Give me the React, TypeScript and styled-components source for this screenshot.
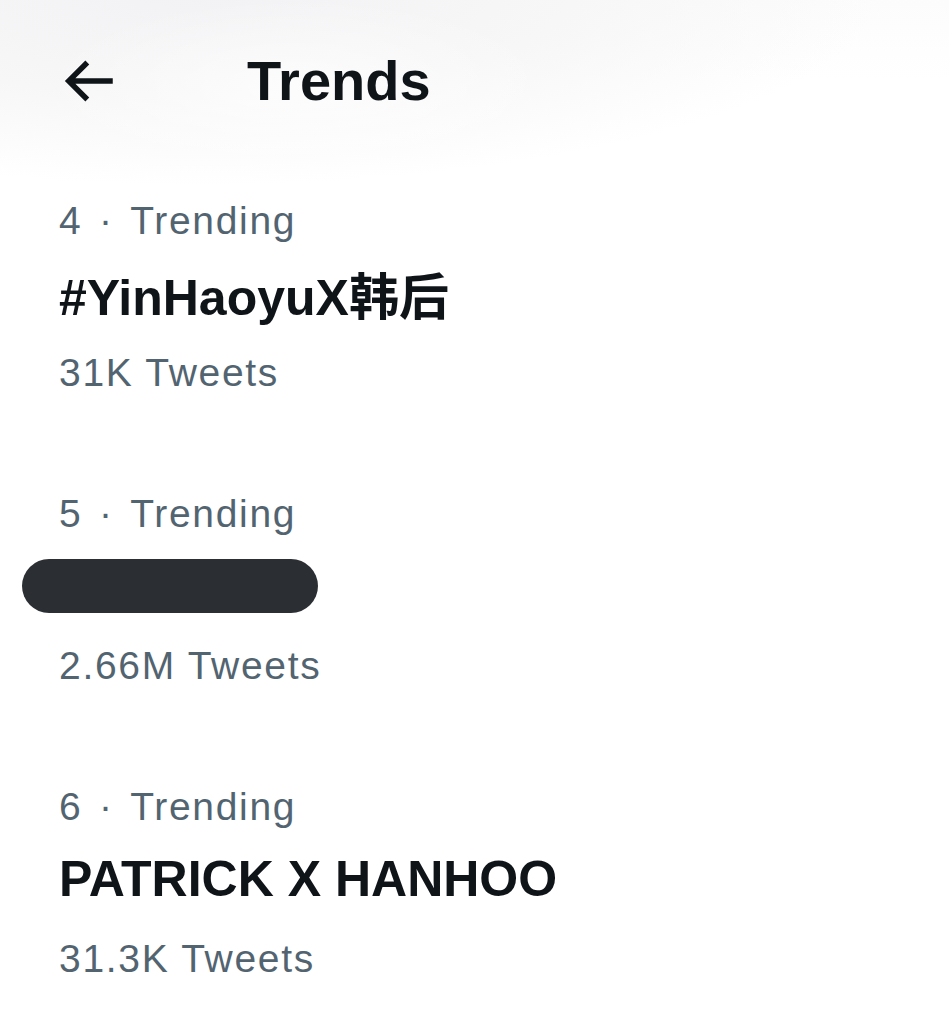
import React from 'react'
import styled, { createGlobalStyle } from 'styled-components'

const GlobalStyle = createGlobalStyle`
    html, body {
        margin: 0;
        padding: 0;
        background: #ffffff;
    }
    body {
        font-family: "Liberation Sans", Arial, "Noto Sans CJK SC", sans-serif;
        color: #0f1419;
    }
`

const Page = styled.div`
    width: 949px;
    min-height: 1024px;
    background:
        radial-gradient(ellipse 260px 90px at 300px 88px, rgba(255, 255, 255, 0.7) 0%, rgba(255, 255, 255, 0) 100%),
        radial-gradient(ellipse 680px 195px at 200px -10px, #f2f2f4 0%, #f7f7f8 55%, rgba(255, 255, 255, 0) 100%),
        linear-gradient(#fcfcfd 0px, #ffffff 80px);
`

const Header = styled.header`
    height: 162px;
    display: flex;
    align-items: center;
    padding-left: 55px;
    gap: 126px;
`

const BackButton = styled.div`
    width: 66px;
    height: 66px;
    display: flex;
    color: #0f1419;
`

const Title = styled.h1`
    margin: 0;
    font-size: 56px;
    font-weight: 700;
    line-height: 62px;
    color: #0f1419;
`

const TrendList = styled.div`
    padding: 35px 0 0 59px;
    display: flex;
    flex-direction: column;
    gap: 93px;
`

const TrendItem = styled.div`
    display: flex;
    flex-direction: column;
`

const MetaLine = styled.div<{ $spaced?: boolean }>`
    font-size: 39px;
    line-height: 48px;
    letter-spacing: 1.7px;
    color: #536471;
    margin-top: ${p => (p.$spaced ? '8px' : '0')};
`

const Dot = styled.span`
    margin: 0 4px;
`

const TrendName = styled.div`
    font-size: 50px;
    font-weight: 700;
    height: 96px;
    color: #0f1419;
    display: flex;
    align-items: center;
`

const Redacted = styled.div`
    width: 296px;
    height: 54px;
    margin-left: -37px;
    border-radius: 27px;
    background: #2b2f33;
`

interface ITrend {
    rank: number
    name?: string
    count: string
}

const trends: ITrend[] = [
    { rank: 4, name: '#YinHaoyuX韩后', count: '31K Tweets' },
    { rank: 5, count: '2.66M Tweets' },
    { rank: 6, name: 'PATRICK X HANHOO', count: '31.3K Tweets' },
]

const BackArrow = () => (
    <svg viewBox="0 0 24 24" width="66" height="66" fill="currentColor">
        <path d="M7.414 13l5.043 5.04-1.414 1.42L3.586 12l7.457-7.46 1.414 1.42L7.414 11H21v2H7.414z" />
    </svg>
)

const App = () => {
    return (
        <Page>
            <GlobalStyle />
            <Header>
                <BackButton>
                    <BackArrow />
                </BackButton>
                <Title>Trends</Title>
            </Header>
            <TrendList>
                {trends.map(t => (
                    <TrendItem key={t.rank}>
                        <MetaLine>
                            {t.rank}<Dot> · </Dot>Trending
                        </MetaLine>
                        <TrendName>{t.name ? t.name : <Redacted />}</TrendName>
                        <MetaLine $spaced>{t.count}</MetaLine>
                    </TrendItem>
                ))}
            </TrendList>
        </Page>
    )
}

export default App
